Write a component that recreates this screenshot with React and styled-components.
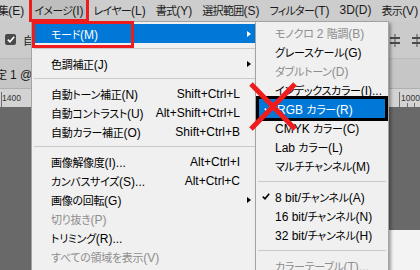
import React from 'react';
import styled, { createGlobalStyle } from 'styled-components';

const GlobalStyle = createGlobalStyle`
  html, body {
    margin: 0;
    padding: 0;
  }

  body {
    width: 420px;
    height: 270px;
    overflow: hidden;
    font-family: "Liberation Sans", "Noto Sans CJK JP", sans-serif;
    font-size: 12px;
    font-feature-settings: "palt";
    color: #000;
  }
`;

const menuBarItems = ['集(E)', 'イメージ(I)', 'レイヤー(L)', '書式(Y)', '選択範囲(S)', 'フィルター(T)', '3D(D)', '表示(V)'];

const imageMenu = [
  { label: 'モード(M)', arrow: true, highlight: true },
  'sep',
  { label: '色調補正(J)', arrow: true },
  'sep',
  { label: '自動トーン補正(N)', shortcut: 'Shift+Ctrl+L' },
  { label: '自動コントラスト(U)', shortcut: 'Alt+Shift+Ctrl+L' },
  { label: '自動カラー補正(O)', shortcut: 'Shift+Ctrl+B' },
  'sep',
  { label: '画像解像度(I)...', shortcut: 'Alt+Ctrl+I' },
  { label: 'カンバスサイズ(S)...', shortcut: 'Alt+Ctrl+C' },
  { label: '画像の回転(G)', arrow: true },
  { label: '切り抜き(P)', disabled: true },
  { label: 'トリミング(R)...' },
  { label: 'すべての領域を表示(V)', disabled: true },
];

const modeMenu = [
  { label: 'モノクロ 2 階調(B)', disabled: true },
  { label: 'グレースケール(G)' },
  { label: 'ダブルトーン(D)', disabled: true },
  { label: 'インデックスカラー(I)...' },
  { label: 'RGB カラー(R)', checked: true, highlight: true, boxed: true },
  { label: 'CMYK カラー(C)' },
  { label: 'Lab カラー(L)' },
  { label: 'マルチチャンネル(M)' },
  'sep',
  { label: '8 bit/チャンネル(A)', checked: true },
  { label: '16 bit/チャンネル(N)' },
  { label: '32 bit/チャンネル(H)' },
  'sep',
  { label: 'カラーテーブル(T)...', disabled: true },
];

// Japanese runs get a narrower setting so they take the width of the UI font
const JP_RUN = /([\u3040-\u30ff\u4e00-\u9fff]+)/;

function Txt({ children }) {
  return children.split(JP_RUN).map((part, i) =>
    i % 2 === 1 ? <Jp key={i}>{part}</Jp> : part
  );
}

function Check() {
  return (
    <svg width="8" height="7" viewBox="0 0 8 7">
      <path d="M0.8 3.6 L3 5.8 L7.2 0.8" fill="none" stroke="currentColor" strokeWidth="1.6" />
    </svg>
  );
}

function AlignIcon() {
  return (
    <svg width="10" height="13" viewBox="0 0 10 13">
      <rect x="0" y="3" width="10" height="2" fill="#4b4b4b" />
      <rect x="0" y="8" width="10" height="2" fill="#4b4b4b" />
      <rect x="4.5" y="0" width="1" height="13" fill="#4b4b4b" />
    </svg>
  );
}

function Ruler() {
  return (
    <svg width="420" height="19" viewBox="0 0 420 19">
      <rect x="0" y="0" width="420" height="19" fill="#d3d3d3" />
      <rect x="0" y="0" width="420" height="1" fill="#b0b0b0" />
      <rect x="1" y="4" width="1" height="15" fill="#6e6e6e" />
      <text x="2" y="13" fontSize="8.5" fill="#333" fontFamily="Liberation Sans, sans-serif">1400</text>
      <rect x="399" y="4" width="1" height="15" fill="#6e6e6e" />
      <rect x="407" y="15" width="1" height="4" fill="#6e6e6e" />
      <rect x="414" y="15" width="1" height="4" fill="#6e6e6e" />
      <text x="401" y="13" fontSize="8.5" fill="#333" fontFamily="Liberation Sans, sans-serif">1000</text>
    </svg>
  );
}

function MenuList({ items, sepHeight }) {
  return items.map((item, i) =>
    item === 'sep' ? (
      <Separator key={i} $height={sepHeight} />
    ) : (
      <MenuItem key={i} $highlight={item.highlight} $disabled={item.disabled} $boxed={item.boxed}>
        <CheckCell>{item.checked && <Check />}</CheckCell>
        <span><Txt>{item.label}</Txt></span>
        <Shortcut>{item.shortcut}</Shortcut>
        <ArrowCell>{item.arrow && <Arrow />}</ArrowCell>
      </MenuItem>
    )
  );
}

export default function App() {
  return (
    <>
      <GlobalStyle />
      <Workspace>
        <MenuBar>
          {menuBarItems.map((label, i) => (
            <MenuBarItem key={label} $active={i === 1}><Txt>{label}</Txt></MenuBarItem>
          ))}
        </MenuBar>
        <OptionsBar>
          <Checkbox>
            <Check />
          </Checkbox>
          <OptionLabel><Txt>自動選択</Txt></OptionLabel>
          <AlignGroup>
            <AlignIcon />
            <AlignIcon />
          </AlignGroup>
        </OptionsBar>
        <TabBar>
          <TabTitle><Txt>定 1 @ 100% (RGB/8)</Txt></TabTitle>
        </TabBar>
        <Ruler />
        <Canvas>
          <Document />
        </Canvas>

        <MainMenu>
          <MenuList items={imageMenu} sepHeight={11} />
        </MainMenu>
        <SubMenu>
          <MenuList items={modeMenu} sepHeight={12} />
        </SubMenu>

        <RedBox $left={29} $top={-3} $width={60} $height={25} />
        <RedBox $left={32} $top={21} $width={102} $height={27} />
        <Cross width="48" height="49" viewBox="0 0 48 49">
          <line x1="2" y1="2" x2="46" y2="47" stroke="#ee1c1c" strokeWidth="5" />
          <line x1="46" y1="2" x2="2" y2="47" stroke="#ee1c1c" strokeWidth="5" />
        </Cross>
      </Workspace>
    </>
  );
}

const Jp = styled.span`
  font-family: "Noto Sans CJK JP", sans-serif;
  font-size: 11px;
  letter-spacing: -0.3px;
`;

const Workspace = styled.div`
  position: relative;
  width: 420px;
  height: 270px;
  overflow: hidden;
  display: flex;
  flex-direction: column;
  background: #696969;
`;

const MenuBar = styled.div`
  display: flex;
  align-items: center;
  height: 21px;
  margin-left: -7px;
  background: #cdcdcd;
  flex-shrink: 0;
`;

const MenuBarItem = styled.div`
  padding: 0 5px;
  line-height: 21px;
  white-space: nowrap;
  color: #1b1b1b;
  background: ${({ $active }) => ($active ? '#bebebe' : 'transparent')};

  ${Jp} {
    letter-spacing: -0.7px;
  }
`;

const OptionsBar = styled.div`
  display: flex;
  align-items: center;
  gap: 7px;
  height: 37px;
  padding-left: 5px;
  background: #cbcbcb;
  border-bottom: 1px solid #b9b9b9;
  flex-shrink: 0;
`;

const Checkbox = styled.div`
  display: flex;
  align-items: center;
  justify-content: center;
  width: 11px;
  height: 11px;
  border-radius: 2px;
  background: #4a4a4a;
  color: #fff;
`;

const OptionLabel = styled.span`
  color: #1b1b1b;
  white-space: nowrap;
`;

const AlignGroup = styled.div`
  display: flex;
  gap: 12px;
  margin-left: auto;
  margin-right: -2px;
  padding-top: 1px;
`;

const TabBar = styled.div`
  display: flex;
  align-items: center;
  height: 29px;
  background: #c6c6c6;
  flex-shrink: 0;
`;

const TabTitle = styled.span`
  margin-left: -4px;
  color: #1b1b1b;
  white-space: nowrap;
`;

const Canvas = styled.div`
  flex: 1;
  display: flex;
  padding: 123px 0 0 200px;
  background: #696969;
`;

const Document = styled.div`
  flex: 1;
  background: #f3f3f3;
`;

const MenuPanel = styled.div`
  position: absolute;
  top: 21px;
  bottom: -10px;
  box-sizing: border-box;
  background: #f0f0f0;
  border: 1px solid #a3a3a3;
`;

const MainMenu = styled(MenuPanel)`
  left: 31px;
  width: 231px;
  padding-top: 2px;
`;

const SubMenu = styled(MenuPanel)`
  left: 255px;
  width: 134px;
  padding-top: 1px;
  box-shadow: 2px 2px 3px rgba(0, 0, 0, 0.35);
`;

const MenuItem = styled.div`
  position: relative;
  z-index: ${({ $boxed }) => ($boxed ? 1 : 0)};
  display: grid;
  grid-template-columns: 18px 1fr auto 20px;
  align-items: center;
  height: 19px;
  margin: ${({ $boxed }) => ($boxed ? '0 3px' : '0 1px')};
  white-space: nowrap;
  background: ${({ $highlight }) => ($highlight ? '#0078d7' : 'transparent')};
  color: ${({ $highlight, $disabled }) => ($highlight ? '#fff' : $disabled ? '#8d8d8d' : '#000')};
  outline: ${({ $boxed }) => ($boxed ? '3px solid #000' : 'none')};
`;

const CheckCell = styled.span`
  display: flex;
  justify-content: center;
`;

const Shortcut = styled.span`
  text-align: right;
`;

const ArrowCell = styled.span`
  display: flex;
  padding-left: 7px;
`;

const Arrow = styled.span`
  width: 0;
  height: 0;
  border-left: 4px solid currentColor;
  border-top: 3.5px solid transparent;
  border-bottom: 3.5px solid transparent;
`;

const Separator = styled.div`
  display: flex;
  align-items: center;
  height: ${({ $height }) => $height}px;
  margin: 0 2px;

  &::after {
    content: '';
    flex: 1;
    height: 1px;
    background: #cacaca;
  }
`;

const RedBox = styled.div`
  position: absolute;
  left: ${({ $left }) => $left}px;
  top: ${({ $top }) => $top}px;
  width: ${({ $width }) => $width}px;
  height: ${({ $height }) => $height}px;
  box-sizing: border-box;
  border: 3px solid #ee1c1c;
  z-index: 2;
`;

const Cross = styled.svg`
  position: absolute;
  left: 249px;
  top: 82px;
  z-index: 2;
`;
